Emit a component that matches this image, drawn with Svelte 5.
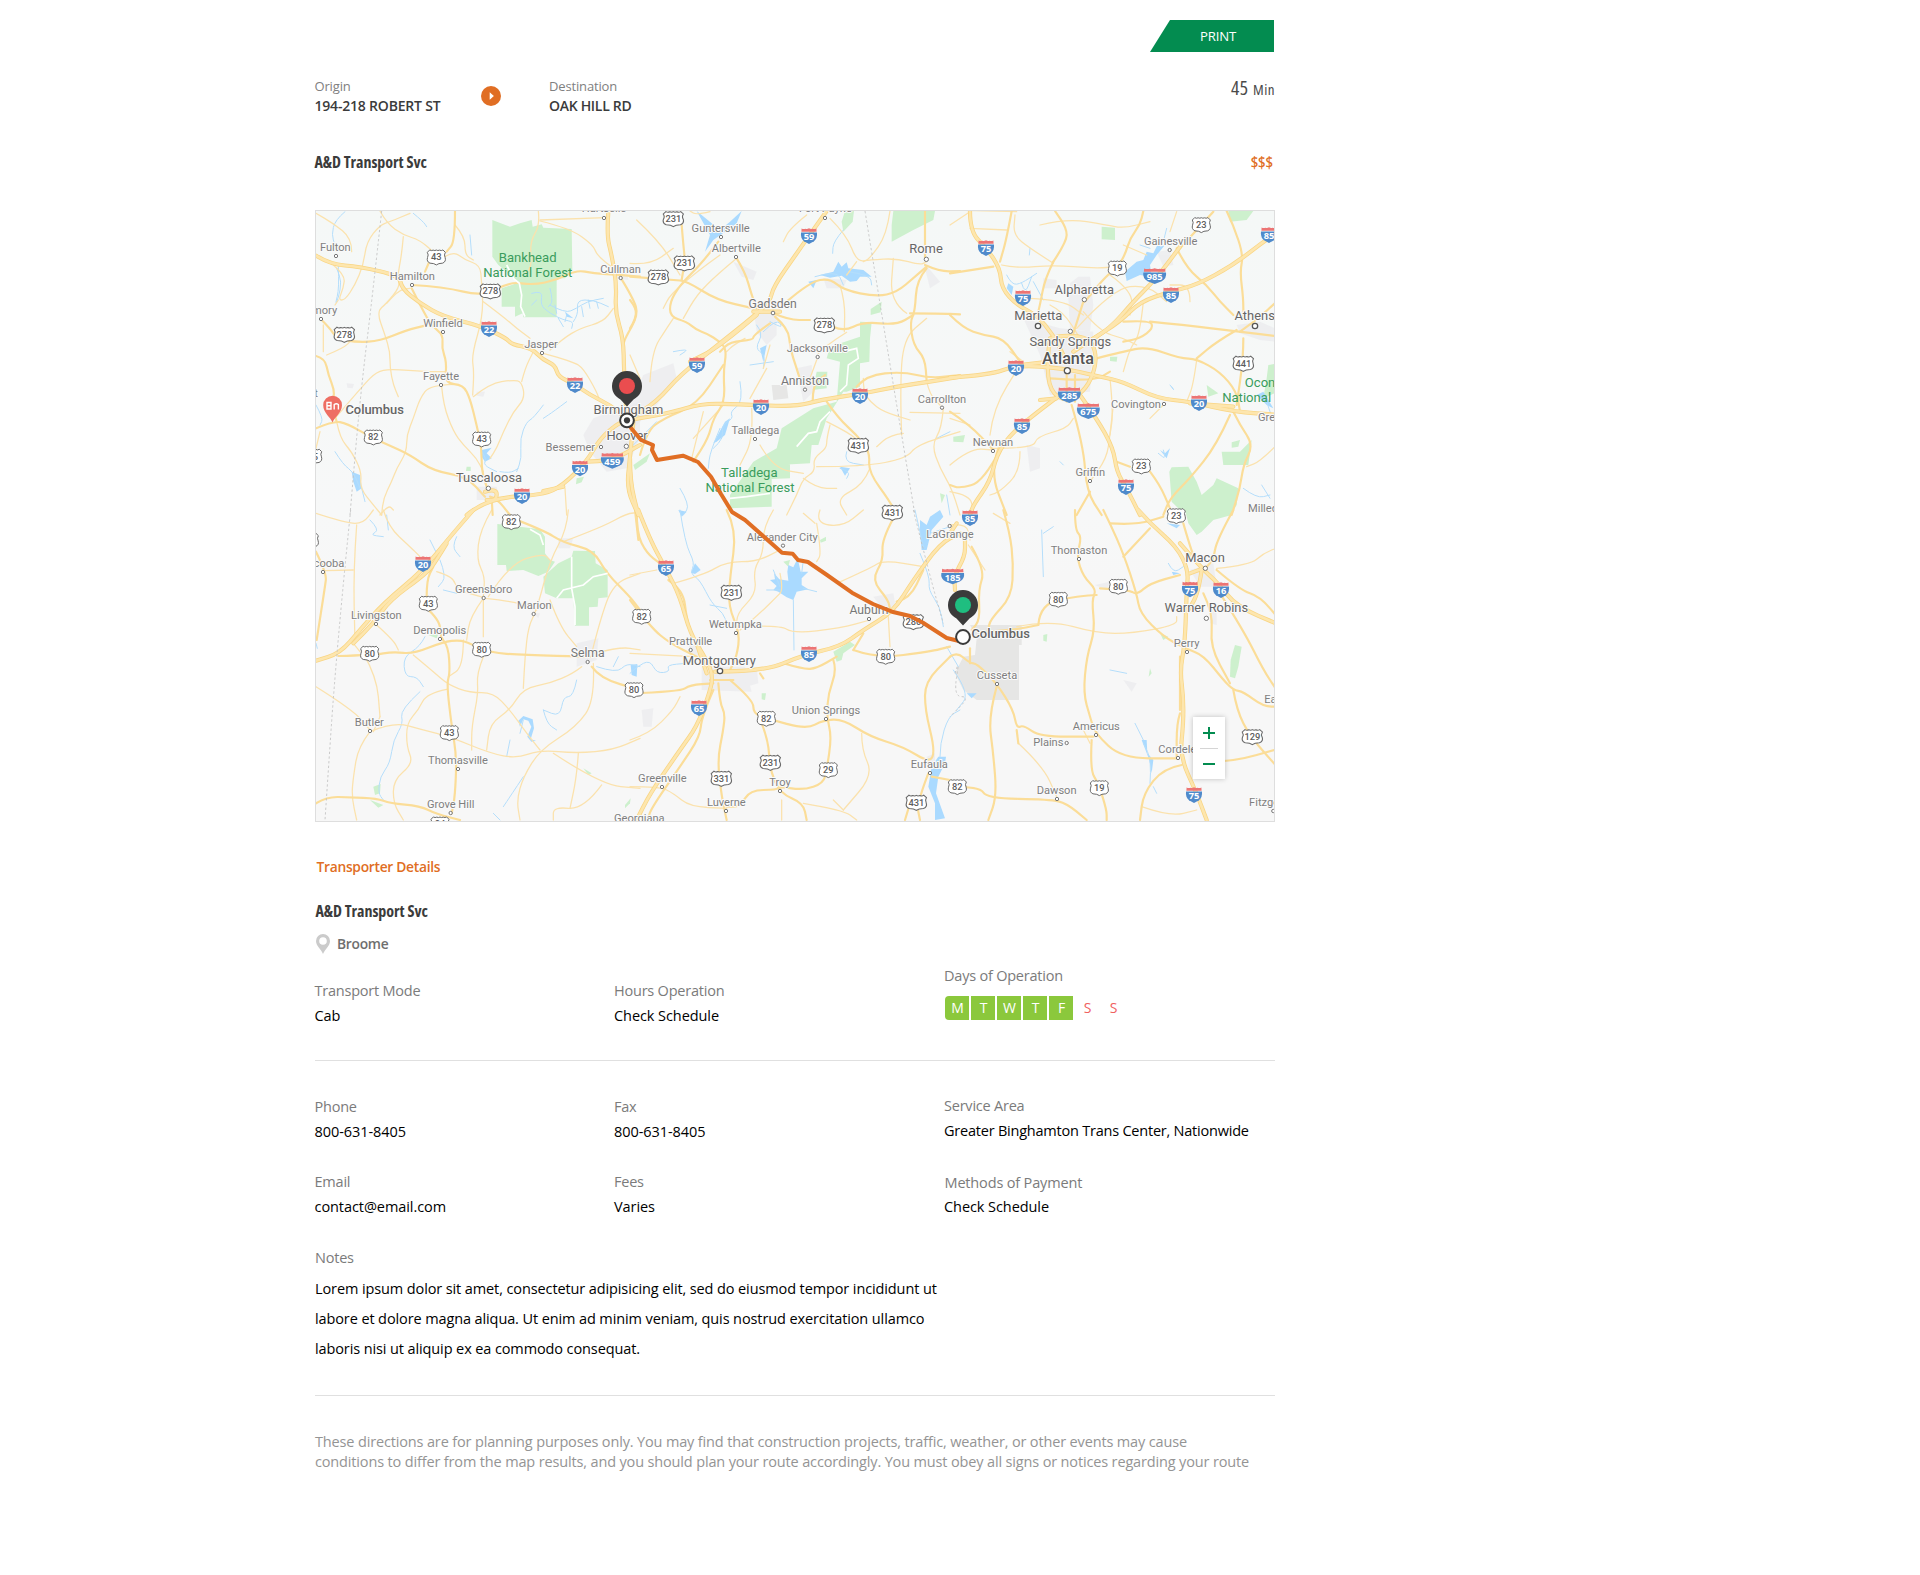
<script>
  // The map is stored as six sections; every section has its own origin and
  // is drawn at a third of its stored coordinates.
  const sections = [
    {
      x: 310, y: 205,
      parks: ['547,45 600,65 630,55 665,45 668,65 695,58 700,68 785,72 787,195 765,220 740,220 740,337 640,337 638,325 615,335 615,305 575,305 575,250 620,235 615,225 590,200 565,180 547,155', '470,785 482,785 482,798 468,798', '800,820 822,815 815,832 798,838'],
      gray: [],
      urban: ['850,640 930,610 990,590 990,700 950,790 890,800 840,740 820,690', '500,845 560,845 570,885 500,885', '500,560 525,560 520,575 500,572', '110,535 132,537 128,550 112,548', '910,190 950,185 955,225 915,220'],
      water: ['105,20 75,45 65,90 75,120', '85,185 88,250 75,300 85,280 95,230 80,190', '665,265 700,255 690,300 720,325 760,345 790,350 785,370', '720,300 765,325 800,310 830,290 880,280', '790,350 805,330 800,285 850,285 895,305', '720,250 730,290 715,305', '840,310 835,285', '680,285 665,300', '745,340 760,365', '815,305 820,335', '735,300 740,325', '770,330 765,350', '860,290 865,310', '700,600 670,640 650,650 630,700 635,760 620,800', '770,590 730,620 700,640', '18,600 40,640 30,660', '75,740 100,780 130,800 150,850', '515,740 530,760 520,780 560,800', '310,25 340,50 350,65', '480,90 485,150', '570,800 600,805 625,790', '155,850 165,890'],
      lakes: ['515,735 545,728 530,745 545,760 525,770 515,755', '125,800 150,810 155,850 140,860 130,830', '765,320 790,340 770,335'],
      minor: ['210,18 230,55 280,90 330,105 380,150', '435,60 465,95 465,150 490,165', '400,158 430,138 465,165 510,180 515,230 520,330 485,450 492,500 488,570', '280,95 275,150 262,215 270,245 230,295 200,320 225,390 240,440 240,490 250,540 265,575', '75,640 160,540 200,500 240,492 350,500 410,500', '430,538 360,540 330,580 310,640 290,690 290,740 260,790 245,830 220,880 215,930', '395,545 400,600 430,680 460,720 500,760 520,800', '490,575 540,535 610,525 635,530 645,580 610,620 580,680 560,730 540,760', '635,530 645,490 670,440', '230,295 265,255 300,250', '685,18 690,60 660,110 665,180 650,205', '690,48 780,70 850,120 860,150 910,190', '690,45 885,38', '520,290 580,335 620,370 660,400', '720,435 760,400 810,370 880,350 910,310', '700,445 790,470 820,490 860,560 870,590', '80,650 90,700 125,740 155,800 150,850 190,900 215,930', '30,680 18,730', '70,180 105,210 100,250 85,285 105,285 135,240 160,180 170,110 210,60 240,50 300,25', '125,140 125,100 70,55 18,25', '40,360 40,440', '50,450 100,430 125,405', '210,930 235,900 250,915', '765,850 770,930', '75,300 85,285'],
      mid: ['435,18 435,110 410,140', '345,200 360,165', '305,250 335,310 365,362 400,390 395,430 410,470 405,535 460,540 480,580 500,660 515,730 515,800 535,860', '18,453 45,460 55,510 75,560 65,600 80,650', '35,345 60,370 80,400 140,412 210,408 290,375 345,362', '305,240 400,245 520,275 600,230 670,240 740,225 800,195 850,205 930,210 990,215', '930,215 970,280 985,330 945,400 940,420', '540,875 560,880 600,930', '18,670 70,648 110,655 190,700 240,722 300,750 370,798 470,815 525,875', '545,880 548,930'],
      major: ['18,152 60,178 150,185 268,212 275,250 330,295 400,335 510,362 590,400 605,418 665,430 700,465 735,480 745,515 790,535 840,570 900,600 950,640', '895,18 890,90 905,150 920,240 915,320 940,400 942,500 950,640', '470,930 530,880 700,870 760,840 830,770 870,700 930,650 960,650', '830,770 900,770 990,720', '970,650 960,760 950,850 985,930', '700,858 760,845', '525,860 560,850 560,885 530,885'],
      border: ['215,18 190,250 150,580 120,930']
    },
    {
      x: 630, y: 205,
      parks: ['690,350 725,352 720,400 718,470 690,475 690,545 650,560 640,560 600,625 590,640 565,720 545,720 540,775 445,780 480,778 480,820 425,822 425,905 300,910 300,870 370,770 440,730 455,670 550,610 620,590 630,470 590,460 600,425 690,395', '755,290 752,322 722,330 722,312', '645,18 672,18 668,50 640,80 635,50', '790,18 915,18 910,45 850,75 785,110 785,60', '560,500 592,500 590,550 548,555', '10,780 60,745 50,770 15,795', '930,865 945,870 935,895'],
      gray: ['425,540 470,540 475,580 430,585'],
      urban: ['40,510 130,475 140,520 80,600 30,650 0,680 0,600', '370,310 440,320 440,390 410,420 380,380', '500,490 545,480 550,560 520,590', '580,220 650,225 640,250 590,250', '880,170 930,230 900,250', '310,170 380,200 370,225 335,215'],
      water: ['640,75 610,110 608,145', '555,215 620,195 640,240', '655,200 720,210 725,240', '380,360 400,385 375,430 405,450 400,490', '400,380 440,340 460,370 420,350', '330,530 340,590 300,620 310,640 275,660 280,700 250,730', '270,670 240,740 235,790', '0,730 80,650', '150,850 180,900 160,930', '650,740 640,770 700,780', '630,790 660,800 650,820', '130,440 180,430 150,450', '960,680 920,700', '950,870 960,930', '360,480 430,470'],
      lakes: ['200,18 270,75 300,50 335,18 320,55 285,80 250,105 225,140 240,90', '570,210 610,200 625,170 635,185 650,172 655,190 700,195 725,215 690,215 680,228 660,230 635,212 600,218', '535,230 560,225 550,250', '250,715 285,650 300,640 285,690 260,710', '390,430 410,420 400,470', '630,785 660,790 645,812'],
      minor: ['240,20 200,30 180,18', '270,150 200,200 120,270 100,310', '20,45 90,110 150,210', '60,530 65,440 110,370 130,340', '320,160 260,210 200,270 160,340', '345,400 310,420 290,440', '530,30 480,70 460,110', '600,40 650,90 680,170 720,165 800,160 870,180 890,170', '680,170 650,210', '780,18 770,90 720,160 700,170', '630,240 645,290 643,380', '565,445 590,420 650,382', '560,465 540,520', '700,520 700,560 720,590 760,620 840,645', '840,622 990,625', '940,610 935,670 905,720 930,790 965,850 990,930', '600,660 590,700 590,730 550,760 555,800 520,820 500,870 470,930', '560,785 700,785 830,760 860,720 990,680', '590,650 650,680 690,710', '390,720 430,790 520,805', '365,610 370,700 330,780', '820,685 780,690 740,725', '830,325 780,290 790,160', '720,790 700,840 620,880 650,930', '890,530 900,570 930,600', '400,490 420,420', '190,700 280,600', '0,175 60,180 130,130', '0,450 30,520', '520,820 560,850 620,850', '410,490 360,580', '220,620 200,700 185,760', '815,690 810,560 820,400 890,340'],
      mid: ['155,60 160,120 165,165 155,225', '0,215 130,225 170,228 260,285 370,310', '265,110 220,170 150,240 120,290 120,335 170,350 200,375 230,385 270,410 290,435 280,500 285,590 250,640 235,700 190,770', '320,160 345,200 365,270 380,310', '430,325 475,345 540,345', '610,365 640,380 700,350 800,360 850,330', '435,335 475,370 480,430 500,490 515,540', '470,290 540,230 600,220 640,255 740,275 800,262 855,215 890,185', '885,18 885,160', '885,180 930,200 990,198', '890,190 860,225 855,320 840,350 850,420 885,460 890,530', '840,325 930,325 990,328', '590,590 625,640 680,690 720,740 715,800 780,890 800,930', '0,285 20,310 15,345 0,370', '548,590 548,540 585,510', '420,355 370,390 370,405 300,410 270,440', '680,545 710,510 820,500 900,520 990,510', '30,750 50,680 100,640 200,600 280,480'],
      major: ['590,18 560,60 500,145 430,245 420,290 370,335 270,415 150,510 80,590 0,640', '380,330 270,425 180,470', '0,645 120,625 215,595 330,598 500,605 570,585 700,565 800,545 900,530 990,515', '0,760 0,830 25,930', '370,320 450,320'],
      border: ['705,18 770,420 855,930']
    },
    {
      x: 950, y: 205,
      parks: ['658,800 665,787 715,785 740,830 755,870 790,840 800,820 865,850 860,900 840,930 750,930 690,915 665,890', '815,740 870,740 905,705 895,780 820,780', '455,65 495,68 495,105 455,103', '835,18 910,18 890,45 840,50', '955,480 985,475 985,560 940,580 950,520', '770,540 805,565 775,575', '845,712 870,705 865,725 845,728', '10,695 45,690 40,712 10,710', '480,455 502,455 500,470 480,468'],
      gray: [],
      urban: ['360,235 385,215 420,215 430,300 420,380 360,370 355,280', '860,360 930,350 975,370 975,410 930,405 870,385', '220,340 330,370 430,380 420,560 300,570 270,450', '280,220 320,225 320,250 280,250', '230,720 270,730 270,790 240,800', '620,140 660,135 670,180 640,185'],
      water: ['170,210 185,240 215,235 260,205', '215,235 225,270 245,215', '280,285 250,230', '660,540 675,560 665,545', '640,735 650,765 625,745', '880,850 920,880 960,870', '935,840 960,880', '950,590 970,650', '330,770 340,780', '240,130 238,150', '600,130 570,120', '640,110 650,70'],
      lakes: ['525,200 560,170 580,165 590,140 610,145 625,115 632,125 645,120 620,150 600,180 605,215 570,210 530,228', '175,235 190,245 185,270 170,250', '630,735 645,745 660,730 650,760', '920,570 940,560 970,610 950,600'],
      minor: ['60,70 170,75', '155,180 200,190 310,180 430,190 510,185', '270,60 350,40 470,60 520,70 600,50', '660,80 680,20', '580,290 570,390 540,430 520,500', '240,280 340,285 400,330', '130,730 250,730 260,695 350,670 370,640', '490,600 480,690 470,760 420,830', '740,465 730,540 710,590', '120,690 130,610 210,480', '310,175 240,130 190,90 195,30', '980,720 930,770 890,785', '210,740 210,800 150,860 120,870', '520,120 590,150', '0,60 60,20', '380,370 490,250 590,240 650,290', '400,320 450,380 520,400 560,420', '300,300 340,320 390,400', '480,210 550,260 540,330', '0,640 60,660', '600,640 640,600', '0,860 60,870 70,920', '0,780 60,730 130,735', '720,290 720,240 660,240', '480,520 490,620 480,690', '0,15 200,20', '180,440 220,470'],
      mid: ['310,170 350,110 350,70 315,18', '310,170 285,220 270,300 262,330', '400,290 370,385', '405,290 460,220 500,190 525,150 540,100 570,60 580,18', '600,350 700,360 870,380 990,395', '870,380 915,350 990,280', '860,375 800,410 740,460', '520,350 600,345 610,370 570,400 520,410', '440,460 520,440 590,425 690,460 740,462 810,500 860,560 870,620', '880,400 880,460 860,600', '850,620 870,660 910,720 880,780 870,850 845,930', '830,18 850,60 880,150 870,200 880,280 880,340', '680,130 710,190 770,240 810,290 850,330', '690,130 735,80 790,20', '840,630 800,720 720,820 660,880 640,930', '365,600 400,720 410,860 455,930', '420,860 380,930', '500,770 540,785', '600,800 630,840 660,910', '0,205 130,185', '0,330 40,370 100,390 160,400 210,470', '0,620 60,660 130,735', '145,730 120,800 170,930', '150,735 100,830 30,850 0,840', '185,18 170,100 150,170', '350,510 350,590', '375,510 375,590', '300,520 430,530 480,500'],
      major: ['60,18 60,80 110,130 150,190 155,250 200,300 260,330 310,390 340,450', '390,570 440,640 490,730 500,800 530,850 570,930', '985,80 940,110 850,180 740,240 660,260 570,290 510,350 430,400 370,440', '690,125 650,180 600,240 550,290 480,370 400,420', '0,518 120,510 200,480 340,490 450,515 520,530 620,580 720,590 850,620 990,630', '720,595 850,605', '330,570 250,630 180,690 140,750 120,830 70,900 60,930', '300,400 290,470 300,560 350,590 400,560 430,510 440,450 420,400 350,390 300,400', '270,585 320,580', '210,480 300,470'],
      border: []
    },
    {
      x: 310, y: 510,
      parks: ['562,42 690,58 705,80 705,130 720,150 735,155 715,185 685,198 640,180 590,183 588,165 562,165', '790,122 855,123 857,160 893,180 893,262 865,265 863,290 837,292 837,347 795,347 790,265 740,265 705,250 700,200 745,160 785,140', '180,870 220,885 205,893', '190,830 212,822 210,850 195,855', '355,375 385,372 380,385', '945,885 962,865 960,880 945,895', '820,775 845,790 835,795'],
      gray: [],
      urban: ['800,400 865,385 860,450 800,470', '745,85 790,85 780,115 745,115', '670,310 690,310 685,325'],
      water: ['180,30 210,60 180,75 220,80', '230,15 235,60', '440,80 425,110 450,140', '390,150 410,200 385,230', '345,380 330,410 280,440 285,500 320,500 340,530', '330,545 270,600 280,640 250,690 240,760 210,800 205,850 220,870', '640,630 630,670', '860,470 920,490 950,460 990,470', '910,470 925,440', '800,510 790,560 760,560 750,620 700,600', '380,130 360,90', '700,600 710,640 740,660', '600,690 590,740', '640,800 600,860 580,890', '18,400 22,415', '550,910 570,930', '400,240 440,250'],
      lakes: ['625,632 640,618 668,628 672,655 662,688 678,692 664,695 652,680 664,650 655,632 640,628 630,650', '962,465 982,462 980,500 965,495'],
      minor: ['18,10 110,40 160,40 190,0', '140,45 130,180 135,400', '45,182 130,180', '220,0 235,50 300,110 330,140', '380,185 430,200 440,240 520,262', '545,0 510,60 500,150 525,200 520,260', '525,265 620,275 680,300', '535,260 600,160 700,130 720,150', '775,0 770,60 720,150 680,300 655,350 645,440 640,535', '520,265 520,380', '520,265 480,320 470,390', '720,270 750,350 800,410', '845,430 870,330 910,220 990,190', '815,470 790,490 720,520 640,535 600,600 540,640 530,720', '460,390 460,470 415,500', '310,435 370,485 415,525 480,548 550,548 600,600 650,670 690,720', '520,440 500,490 505,550 485,650 485,720', '410,538 350,550 325,600 290,640 290,710 310,760 250,810 250,880 280,930', '200,345 250,390 265,420', '160,430 200,500 210,620', '18,530 130,600 180,660', '180,665 250,635 340,660 420,680 540,730 620,745 690,720 800,730 910,720 990,685', '180,665 145,710 130,800 125,860 140,930', '850,460 855,570 800,650 690,720 640,800 620,870 630,930', '730,730 875,825 990,835', '805,730 800,800 780,895', '875,825 820,900 730,890 730,930', '760,95 880,50 950,10 990,8', '190,665 210,620', '130,400 150,425', '855,430 930,410 990,420'],
      mid: ['350,260 350,210 370,170', '85,438 190,435 250,425 310,432 400,395 450,390 480,400 540,428 640,435 840,440', '345,290 390,330 390,380 415,410 420,490 410,520 425,650 440,740 435,860 425,910', '18,880 50,860 120,862 200,865 240,880 330,888 380,912 450,930', '590,18 700,60 760,98 850,120 890,190 960,260 990,300', '845,470 870,505 990,540', '18,125 50,190 45,230 20,390', '975,0 985,90'],
      major: ['490,0 420,80 340,180 220,280 150,360 90,430 18,452', '410,100 380,150 350,190 240,270 190,340 130,400'],
      border: ['122,0 80,410 45,930']
    },
    {
      x: 630, y: 510,
      parks: ['610,425 660,395 675,405 640,430 635,450 620,455', '395,550 408,550 405,570 395,568', '570,90 588,80 588,92 572,98', '460,155 480,150 475,170'],
      gray: [],
      urban: ['215,470 345,470 365,545 215,540', '175,400 215,410 215,440 185,440', '730,260 790,250 800,310 760,300', '890,740 915,730 915,770 890,770', '35,600 70,595 65,650 40,650', '340,480 380,470 385,520 350,530'],
      water: ['150,0 165,100 195,160 180,190 210,210 245,280 280,310 290,340', '490,270 492,420', '0,490 20,470 60,450 80,490 120,485 110,465 170,460', '240,285 290,295', '930,740 930,700 955,620 990,600', '870,130 900,200 895,240 930,290 940,350', '855,0 880,110', '900,70 960,50', '950,410 985,470', '430,180 450,230', '410,240 450,240', '520,235 560,245', '520,150 515,190'],
      lakes: ['475,165 490,172 503,145 512,185 535,185 515,205 515,225 535,238 500,245 490,270 470,262 445,245 430,240 440,228 420,210 435,208 432,190 448,208 475,212 472,185', '905,770 925,740 948,740 945,760 925,800 918,850 945,925 915,930 915,880 895,830', '870,30 890,45 900,20 930,0 940,20 905,60 890,120 875,120 870,70', '183,188 195,160 212,180 195,192', '145,0 170,5 155,20'],
      minor: ['0,195 80,180', '130,220 220,195 290,155 380,155 450,120', '430,0 400,50 400,130 370,180 380,250 320,310 320,360', '570,0 555,40 640,50 700,0', '560,40 575,130 560,155', '620,220 720,175 760,150 880,170', '320,350 450,345 490,370 630,355 720,330', '450,190 460,240 440,260 390,310 330,360', '0,430 190,440', '0,690 60,670 130,600 150,560', '0,830 90,830 130,850 180,890 290,895', '695,670 695,720 730,795 640,900', '455,870 455,930', '520,880 640,900 680,930', '775,320 780,410', '555,40 520,10', '610,870 640,900'],
      mid: ['20,0 20,70 50,130 90,160', '290,0 320,60 300,200 295,290 330,370 320,440 300,480', '0,270 60,350 120,400 200,440', '0,550 150,545 180,525 250,520', '300,510 370,570 370,610 410,625 530,658 580,630 640,628 720,680 820,710 900,760 915,720 885,600 885,515 960,440', '265,520 270,580 285,610 280,660 262,750 275,860 290,930', '395,640 415,690 420,780 450,850 520,880 530,930', '610,450 620,480 595,550 590,620 605,680 590,780 580,820 520,840 450,830 440,840 360,840 330,890 290,890', '790,25 755,90 760,150 725,210 775,270 780,300', '460,460 520,478 560,475 620,440', '670,420 740,445 900,425 960,410', '895,790 860,880 870,930', '840,880 825,930', '905,800 960,810', '390,490 400,505', '700,370 670,420', '115,210 160,240 170,330 195,400', '250,540 215,620 210,680 150,770 60,900 55,930', '240,510 310,510', '800,275 840,265 880,180'],
      major: ['25,0 60,90 110,180 150,260 180,370 230,450 250,500 235,560 200,650 150,720 60,850 15,940', '255,485 400,485 520,435 630,410 700,360 790,305 850,210 930,100 990,70', '200,400 230,490'],
      border: ['850,0 900,200 940,340']
    },
    {
      x: 950, y: 510,
      parks: ['705,0 810,0 845,15 790,30 755,65 740,75 715,40', '855,405 875,410 865,470 855,505 840,500 842,450', '280,375 292,372 290,395 280,392', '630,370 655,380 640,390', '600,475 605,490 596,500'],
      gray: ['60,345 215,345 215,405 207,405 207,570 80,570 40,540 15,490 40,440 75,435 80,385'],
      urban: ['720,180 790,160 800,230 750,230', '780,300 800,300 800,345 780,340', '435,225 480,215 470,240', '520,510 560,520 545,545', '690,400 720,395 715,420', '415,650 450,650 445,670'],
      water: ['275,60 280,200', '655,160 670,190 700,170', '555,640 580,690', '600,820 605,750 580,700', '620,850 610,830', '480,480 530,490', '10,480 60,550 20,600', '280,70 310,50'],
      lakes: ['575,690 590,690 592,730 610,750 605,790 598,750', '50,550 80,550 65,565', '655,165 665,185 690,190 670,195', '650,40 690,45 680,55'],
      minor: ['200,350 300,330 440,370 550,370 680,345 680,320', '205,700 280,770 320,860', '800,175 900,165 940,130 990,110', '575,890 660,920 740,900', '0,45 50,40 60,90', '55,105 105,180', '420,700 400,660', '130,10 180,40'],
      mid: ['375,0 375,60 395,80 380,140 400,200 440,240 425,270 435,360 410,440 400,550 420,620 435,670 515,745 680,745', '780,755 850,755 990,715', '450,235 540,240 560,255 600,220 690,195', '265,345 270,280 390,258 440,255', '110,365 190,360 265,345', '460,0 480,40 520,130 560,250 570,310 640,380 705,415 760,435 820,510 850,540 880,545 940,590 990,590', '480,40 560,45 640,20', '760,250 790,310 780,410 840,520', '850,540 860,600 900,680 990,780', '800,180 870,240 930,260 990,330', '810,250 880,360 940,480 980,540', '160,0 180,70 190,160 185,260 120,330 115,360', '65,110 105,180 85,240 90,330 65,360', '60,415 60,460', '0,440 20,425 60,460 80,460 140,520 190,600 200,655 220,645 270,680 430,680', '140,530 115,620 130,730 140,860 115,930', '0,830 90,830 110,865 300,868 350,880 410,930', '425,690 420,780 445,820 470,900 470,930', '690,610 680,640 680,745', '695,765 640,775 580,850 570,930', '600,55 520,140', '700,40 720,110 740,160', '850,0 800,90 790,150 770,170', '690,440 690,600', '200,660 205,700'],
      major: ['565,0 600,40 680,110 715,180 710,240 705,400 690,480 700,560 700,640 690,740 740,850 770,930', '690,100 760,180 800,215 860,290 990,345', '755,180 745,250 715,300', '15,240 10,200 45,140 45,90', '0,70 20,40', '720,190 760,175'],
      border: ['15,490 30,440 10,560 60,560 0,620']
    }
  ];

  // [section, label, centre x, baseline, size]
  const places = [
    [0, 'Fulton', 76, 137, 's'], [0, 'Hamilton', 307, 224, 's'], [0, 'Winfield', 399, 365, 's'], [0, 'Jasper', 693, 429, 's'],
    [0, 'Fayette', 393, 524, 's'], [0, 'Amory', 33, 327, 's'], [0, 'Hartselle', 882, 22, 's'], [0, 'Cullman', 932, 203, 's'],
    [0, 'Birmingham', 955, 628, 'm'], [0, 'Hoover', 951, 704, 'm'], [0, 'Bessemer', 781, 738, 's'], [0, 'Tuscaloosa', 537, 832, 'm'],
    [0, 'Columbus', 194, 627, 'b'], [0, 't', 18, 576, 's'],
    [1, 'Guntersville', 272, 80, 's'], [1, 'Albertville', 319, 140, 's'], [1, 'Fort Payne', 586, 22, 's'], [1, 'Rome', 888, 145, 'm'],
    [1, 'Gadsden', 428, 309, 'n'], [1, 'Jacksonville', 562, 440, 's'], [1, 'Anniston', 525, 540, 'n'], [1, 'Talladega', 376, 687, 's'],
    [2, 'Gainesville', 662, 119, 's'], [2, 'Alpharetta', 403, 266, 'm'], [2, 'Marietta', 265, 344, 'm'], [2, 'Sandy Springs', 361, 423, 'm'],
    [2, 'Atlanta', 354, 476, 'l'], [2, 'Carrollton', -24, 593, 's'], [2, 'Covington', 558, 609, 's'], [2, 'Newnan', 129, 723, 's'],
    [2, 'Griffin', 421, 812, 's'], [2, 'Athens', 914, 344, 'm'], [2, 'Greensboro', 1010, 647, 's'], [2, 'Milledgeville', 986, 920, 's'],
    [3, 'Scooba', 47, 171, 's'], [3, 'Greensboro', 521, 249, 's'], [3, 'Marion', 673, 297, 's'], [3, 'Livingston', 199, 327, 's'],
    [3, 'Demopolis', 389, 372, 's'], [3, 'Selma', 833, 441, 'n'], [3, 'Butler', 178, 647, 's'], [3, 'Thomasville', 444, 762, 's'],
    [3, 'Grove Hill', 422, 893, 's'],
    [4, 'Alexander City', 457, 92, 's'], [4, 'LaGrange', 960, 83, 's'], [4, 'Wetumpka', 316, 354, 's'], [4, 'Prattville', 182, 405, 's'],
    [4, 'Montgomery', 268, 464, 'm'], [4, 'Auburn', 717, 312, 'n'], [4, 'Union Springs', 588, 612, 's'], [4, 'Eufaula', 898, 774, 's'],
    [4, 'Greenville', 97, 815, 's'], [4, 'Troy', 450, 828, 's'], [4, 'Luverne', 289, 888, 's'], [4, 'Georgiana', 28, 937, 's'],
    [5, 'Thomaston', 387, 131, 's'], [5, 'Macon', 765, 157, 'm'], [5, 'Warner Robins', 769, 307, 'm'], [5, 'Columbus', 152, 385, 'b'],
    [5, 'Cusseta', 141, 506, 's'], [5, 'Perry', 710, 411, 's'], [5, 'Americus', 439, 660, 's'], [5, 'Plains', 295, 708, 's'],
    [5, 'Cordele', 682, 728, 's'], [5, 'Dawson', 320, 851, 's'], [5, 'Eastman', 1008, 578, 's'], [5, 'Fitzgerald', 970, 887, 's'],
    [0, 'Bankhead', 653, 171, 'g'], [0, 'National Forest', 653, 216, 'g'], [1, 'Talladega', 358, 817, 'g'],
    [1, 'National Forest', 360, 861, 'g'], [2, 'Oconee', 951, 546, 'g'], [2, 'National Forest', 950, 590, 'g']
  ];

  // [section, x, y, radius]
  const dots = [
    [0, 78, 153, 5], [0, 306, 240, 5], [0, 399, 381, 5], [0, 696, 444, 5], [0, 393, 540, 5], [0, 33, 342, 5], [0, 882, 39, 5],
    [0, 932, 219, 5], [0, 949, 724, 6.5], [0, 873, 726, 5], [0, 535, 850, 6.5],
    [1, 273, 96, 5], [1, 318, 156, 5], [1, 585, 39, 5], [1, 889, 163, 6.5], [1, 429, 324, 5.5], [1, 563, 456, 5], [1, 525, 554, 5], [1, 375, 702, 5],
    [2, 659, 135, 5], [2, 403, 284, 6.5], [2, 264, 363, 8], [2, 361, 379, 6.5], [2, 352, 497, 9], [2, -24, 608, 5], [2, 642, 597, 5],
    [2, 129, 738, 5], [2, 420, 828, 5], [2, 915, 363, 8],
    [3, 39, 186, 5], [3, 521, 264, 5], [3, 671, 312, 5], [3, 198, 342, 5], [3, 390, 387, 5], [3, 833, 456, 5], [3, 180, 663, 5],
    [3, 444, 777, 5], [3, 422, 909, 5],
    [4, 459, 107, 5], [4, 959, 48, 5], [4, 318, 369, 5], [4, 182, 420, 5], [4, 270, 483, 8], [4, 717, 327, 5], [4, 588, 627, 5],
    [4, 900, 789, 5], [4, 96, 831, 5], [4, 450, 843, 5], [4, 288, 903, 5],
    [5, 387, 147, 5], [5, 766, 175, 6.5], [5, 769, 325, 6.5], [5, 141, 522, 5], [5, 711, 426, 5], [5, 438, 675, 5], [5, 350, 699, 5],
    [5, 684, 744, 5], [5, 321, 867, 5], [5, 970, 903, 5]
  ];

  const interstates = [
    [0, '22', 537, 372], [0, '22', 795, 540], [0, '459', 907, 767], [0, '20', 810, 790], [0, '20', 636, 873],
    [1, '59', 537, 93], [1, '59', 201, 480], [1, '20', 393, 606], [1, '20', 690, 573],
    [2, '75', 108, 129], [2, '75', 219, 279], [2, '985', 614, 213], [2, '85', 663, 270], [2, '85', 957, 90], [2, '20', 198, 489],
    [2, '285', 358, 570], [2, '675', 415, 618], [2, '20', 747, 594], [2, '85', 216, 663], [2, '75', 528, 846],
    [3, '20', 339, 162], [4, '65', 108, 174], [4, '65', 207, 594], [4, '85', 537, 432],
    [5, '85', 60, 24], [5, '185', 8, 199], [5, '75', 720, 238], [5, '16', 813, 240], [5, '75', 732, 855]
  ];

  const highways = [
    [0, '43', 379, 157], [0, '278', 541, 259], [0, '278', 103, 389], [0, '82', 190, 697], [0, '43', 515, 703], [0, '45', 8, 755],
    [1, '231', 130, 42], [1, '231', 163, 175], [1, '278', 85, 217], [1, '278', 583, 361], [1, '431', 685, 722],
    [2, '19', 502, 190], [2, '23', 754, 60], [2, '441', 880, 476], [2, '23', 574, 784],
    [3, '82', 604, 36], [3, '43', 355, 281], [3, '80', 179, 431], [3, '80', 515, 419], [3, '43', 418, 669], [3, '11', -2, 92], [3, '84', 390, 943],
    [4, '431', 787, 8], [4, '231', 304, 248], [4, '82', 35, 320], [4, '80', 12, 540], [4, '280', 850, 336], [4, '80', 767, 440],
    [4, '82', 409, 626], [4, '231', 421, 758], [4, '331', 274, 806], [4, '29', 595, 780], [4, '431', 859, 878],
    [5, '23', 679, 18], [5, '80', 325, 269], [5, '80', 505, 230], [5, '82', 22, 831], [5, '19', 448, 834], [5, '129', 907, 681]
  ];

  const route = '627,422 631,428 641,440 653,445 652,450 657,460 683,455.7 698,462 711,476.7 721,494 732,512 745,520 782,552.7 792.7,553.7 798,560 808,562 827,575 852,592.7 873,604 892,611.7 910,616 923,622.7 946.7,638 963,642';

  const at = (section, x, y) => `translate(${sections[section].x + x / 3} ${sections[section].y + y / 3})`;

  // Softens a polyline by turning each vertex into a quadratic bend.
  function soften(points) {
    const p = points.split(' ').map((pair) => pair.split(',').map(Number));
    if (p.length < 3) return `M${p.join('L')}`;
    let d = `M${p[0]}`;
    for (let i = 1; i < p.length - 1; i += 1) {
      const [x, y] = p[i];
      const [nx, ny] = p[i + 1];
      d += `Q${x},${y} ${(x + nx) / 2},${(y + ny) / 2}`;
    }
    return `${d}L${p[p.length - 1]}`;
  }

  const layers = ['urban', 'parks', 'gray', 'lakes'];
  const lines = ['water', 'minor', 'mid', 'major-case', 'major', 'border'];

  const days = [
    { letter: 'M', open: true }, { letter: 'T', open: true }, { letter: 'W', open: true }, { letter: 'T', open: true },
    { letter: 'F', open: true }, { letter: 'S', open: false }, { letter: 'S', open: false }
  ];
</script>

{#snippet field(label, value)}
  <div class="field">
    <div class="label">{label}</div>
    <div class="value">{value}</div>
  </div>
{/snippet}

<main class="page">
  <button class="print">PRINT</button>

  <section class="trip">
    <div class="stop origin">
      <div class="caption">Origin</div>
      <div class="street">194-218 ROBERT ST</div>
    </div>
    <svg class="arrow" viewBox="0 0 20 20"><circle cx="10" cy="10" r="10" fill="#e06e24" /><path d="M8.7 6.3v7.4l4.200-3.700z" fill="#fff" /></svg>
    <div class="stop">
      <div class="caption">Destination</div>
      <div class="street">OAK HILL RD</div>
    </div>
    <div class="duration">45 <small>Min</small></div>
  </section>

  <div class="carrier">
    <h1>A&amp;D Transport Svc</h1>
    <span class="price">$$$</span>
  </div>

  <div class="map">
    <svg class="canvas" viewBox="316 211 958 610">
      {#each layers as layer}
        {#each sections as s}
          <g transform="translate({s.x} {s.y}) scale(0.33333)" class={layer}>
            {#each s[layer] as shape}<polygon points={shape} />{/each}
          </g>
        {/each}
      {/each}
      {#each lines as line}
        {#each sections as s}
          <g transform="translate({s.x} {s.y}) scale(0.33333)" class="line {line}">
            {#each s[line.replace('-case', '')] as shape}<path d={soften(shape)} />{/each}
          </g>
        {/each}
      {/each}
      <g transform="translate(310 205) scale(0.33333)" class="trail">
        <path d="M590,180L612,222L628,235L635,270L632,305L645,335" />
      </g>
      <g transform="translate(630 205) scale(0.33333)" class="trail">
        <path d="M500,725L535,685L560,680L570,650L600,620M640,440L680,430L685,460L655,480L650,540L630,560M300,880L350,875L420,865" />
      </g>
      <g transform="translate(310 510) scale(0.33333)" class="trail">
        <path d="M785,140L785,235L795,290L795,345M740,265L760,240L820,225L850,200L893,190M660,58L690,75L700,105" />
      </g>

      {#each dots as [s, x, y, r]}
        <circle class="dot" transform={at(s, x, y)} r={r / 3} class:strong={r > 7} />
      {/each}
      {#each places as [s, name, x, y, size]}
        <text class="place {size}" transform={at(s, x, y)}>{name}</text>
      {/each}
      {#each highways as [s, number, x, y]}
        <g transform="{at(s, x, y)} scale({number.length > 2 ? 1.12 : 1} 1)">
          <path class="us" d="M-6.6-7.4Q-5-6.2-3.2-7.2Q-1.4-6.3 0-7.3Q1.4-6.3 3.2-7.2Q5-6.2 6.6-7.4L9-5Q7.4-2.4 8.8 0.2Q10 4.2 6.4 5.8Q2 5.9 0 7.6Q-2 5.9-6.4 5.8Q-10 4.2-8.8 0.2Q-7.4-2.4-9-5Z" />
        </g>
        <text class="us-number" transform={at(s, x, y + 9)}>{number}</text>
      {/each}
      {#each interstates as [s, number, x, y]}
        <g transform="{at(s, x, y)} scale({number.length > 2 ? 1.42 : 1} 1)">
          <path d="M-7.4-7.6Q-5.5-6.4-3.6-7.3Q-1.8-6.7 0-7.7Q1.8-6.7 3.6-7.3Q5.5-6.4 7.4-7.6L7.6-4.2H-7.6Z" fill="#ec7474" />
          <path d="M-8-3.4H8Q8.6 2.4 5 5.2L0 8L-5 5.2Q-8.6 2.4-8-3.4Z" fill="#4f8acb" />
        </g>
        <text class="i-number" transform={at(s, x, y + 13)}>{number}</text>
      {/each}

      <path d="M332.500 422.500C331 417.500 323.200 413 323.200 405.200A9.400 9.400 0 0 1 342 405.200C342 413 334 417.500 332.500 422.500Z" fill="#ee6e63" />
      <path d="M327 402.500h4v6.500h-4zM327 405.800h4M334.200 409.600v-5.100q2.100-1.400 4.200 0v5.100" fill="none" stroke="#fff" stroke-width="1.400" />

      <polyline class="route" points={route} />

      <path class="pin" d="M627 406.500L620.500 399.500C614 396 612 391 612 386A15 15 0 0 1 642 386C642 391 640 396 633.500 399.500Z" />
      <circle cx="627" cy="386" r="8" fill="#ea4d4f" />
      <circle class="ring" cx="627" cy="420.300" r="6.900" />
      <circle cx="627" cy="420.300" r="3.100" fill="#3b3b3b" />
      <path class="pin" d="M963 625.500L956.500 618.500C950 615 948 610 948 605A15 15 0 0 1 978 605C978 610 976 615 969.500 618.500Z" />
      <circle cx="963" cy="605" r="8" fill="#1fbe80" />
      <circle class="ring" cx="963" cy="637" r="6.900" />
    </svg>

    <div class="zoom">
      <button aria-label="Zoom in"><svg viewBox="0 0 12 12"><path d="M6 0v12M0 6h12" /></svg></button>
      <button aria-label="Zoom out"><svg viewBox="0 0 12 12"><path d="M0 6h12" /></svg></button>
    </div>
  </div>

  <h2>Transporter Details</h2>
  <h3>A&amp;D Transport Svc</h3>
  <div class="place-line">
    <svg viewBox="0 0 14 20"><path fill-rule="evenodd" d="M7 0a7 7 0 0 1 7 7c0 5-5 8-7 13c-2-5-7-8-7-13a7 7 0 0 1 7-7zM7 3.200a3.800 3.800 0 1 0 0 7.600a3.800 3.800 0 0 0 0-7.600z" fill="#cbcbcb" /></svg>
    <span>Broome</span>
  </div>

  <section class="grid service">
    {@render field('Transport Mode', 'Cab')}
    {@render field('Hours Operation', 'Check Schedule')}
    <div class="schedule">
      <div class="label">Days of Operation</div>
      <div class="days">
        {#each days as day}<span class:open={day.open}>{day.letter}</span>{/each}
      </div>
    </div>
  </section>

  <hr />

  <section class="grid contact">
    {@render field('Phone', '800-631-8405')}
    {@render field('Fax', '800-631-8405')}
    {@render field('Service Area', 'Greater Binghamton Trans Center, Nationwide')}
    {@render field('Email', 'contact@email.com')}
    {@render field('Fees', 'Varies')}
    {@render field('Methods of Payment', 'Check Schedule')}
  </section>

  <section class="notes">
    <div class="label">Notes</div>
    <p>
      Lorem ipsum dolor sit amet, consectetur adipisicing elit, sed do eiusmod tempor incididunt ut<br />
      labore et dolore magna aliqua. Ut enim ad minim veniam, quis nostrud exercitation ullamco<br />
      laboris nisi ut aliquip ex ea commodo consequat.
    </p>
  </section>

  <hr />

  <p class="disclaimer">
    These directions are for planning purposes only. You may find that construction projects, traffic, weather, or other events may cause<br />
    conditions to differ from the map results, and you should plan your route accordingly. You must obey all signs or notices regarding your route
  </p>
</main>

<style>
  :global(body) { background: #fff; }
  .page {
    box-sizing: border-box;
    width: 1275px;
    min-height: 1575px;
    padding: 20px 0 0 315px;
    display: flex;
    flex-direction: column;
    font: 14.5px/20px 'Open Sans', 'Noto Sans', sans-serif;
    color: #000;
    white-space: nowrap;
  }
  h1, h2, h3, p { margin: 0; }
  button { border: 0; padding: 0; font: inherit; cursor: pointer; }
  .print {
    align-self: flex-end;
    width: 124px;
    height: 32px;
    margin-right: 1px;
    padding-left: 12px;
    background: #038c50;
    color: #fff;
    font-size: 13.2px;
    letter-spacing: -0.2px;
    clip-path: polygon(20px 0, 100% 0, 100% 100%, 0 100%);
  }
  .trip { display: flex; margin-top: 24px; height: 40px; }
  .origin { width: 166px; }
  .caption { color: #808080; font-size: 13px; letter-spacing: -0.15px; }
  .street { color: #3b3b3b; font-size: 14px; font-weight: 600; letter-spacing: -0.2px; }
  .stop { margin-left: -0.5px; }
  .stop:not(.origin) .street { letter-spacing: -0.3px; }
  .arrow { width: 20px; height: 20px; margin: 10px 48.5px 0 0.5px; }
  .duration { margin-left: auto; color: #4a4a4a; font-size: 19.5px; line-height: 24px; font-stretch: 75%; letter-spacing: 0.6px; }
  .duration small { font-size: 15px; letter-spacing: 0.5px; }
  .carrier { display: flex; justify-content: space-between; margin-top: 34px; }
  h1, h3, .price { font-size: 16px; line-height: 24px; font-weight: 700; font-stretch: 75%; color: #3b3b3b; letter-spacing: -0.05px; }
  h1 { margin-left: -0.5px; }
  .carrier .price { color: #e06e24; margin-right: 2px; font-weight: 600; font-size: 16.8px; }
  .map {
    position: relative;
    box-sizing: border-box;
    height: 612px;
    margin-top: 36px;
    border: 1px solid #dedede;
    background: linear-gradient(#f5f8f7 0, #f7f8f8 50%, #f7f7f7 60%);
    overflow: hidden;
  }
  .canvas { display: block; width: 958px; height: 610px; }
  .parks { fill: #cdf0cd; }
  .urban { fill: #ebebee; opacity: 0.7; }
  .gray { fill: #e6e6e5; }
  .lakes { fill: #aadaff; }
  .line { fill: none; stroke-linejoin: round; stroke-linecap: round; }
  .water { stroke: #b5defb; stroke-width: 3; }
  .minor { stroke: #fbe2ad; stroke-width: 3.8; }
  .mid { stroke: #fbdd98; stroke-width: 6.5; }
  .major-case { stroke: #f9d583; stroke-width: 12.5; }
  .major { stroke: #fde6ae; stroke-width: 8; }
  .border { stroke: #c0c0c0; stroke-width: 2.5; stroke-dasharray: 7 7; stroke-linecap: butt; }
  .trail { fill: none; stroke: #fff; stroke-width: 5; }
  .dot { fill: #fff; stroke: #777; stroke-width: 1; }
  .strong { stroke: #555; stroke-width: 1.3; }
  .place {
    font-family: Roboto, 'Liberation Sans', sans-serif;
    text-anchor: middle;
    stroke: #fafafa;
    stroke-width: 2px;
    stroke-linejoin: round;
    paint-order: stroke;
  }
  .s { font-size: 11.1px; fill: #7f7f7f; }
  .n { font-size: 12.2px; fill: #777; }
  .m { font-size: 12.9px; fill: #666; }
  .b { font-size: 12.9px; font-weight: 500; fill: #656565; }
  .l { font-size: 16.2px; font-weight: 500; fill: #555; }
  .g { font-size: 13.1px; fill: #3a9c5c; stroke: none; }
  .us { fill: #fff; stroke: #6a6a6a; stroke-width: 1; }
  .us-number { font: 500 9.3px Roboto, sans-serif; fill: #5d5d5d; text-anchor: middle; }
  .i-number { font: 700 9.3px 'Open Sans', sans-serif; fill: #fff; text-anchor: middle; }
  .route { fill: none; stroke: #e06e24; stroke-width: 4; stroke-linejoin: round; }
  .pin { fill: #3b3b3b; }
  .ring { fill: #fff; stroke: #3b3b3b; stroke-width: 2; }
  .zoom {
    position: absolute;
    box-sizing: border-box;
    right: 49px;
    bottom: 42px;
    width: 32px;
    height: 62px;
    padding-top: 1px;
    background: #fff;
    box-shadow: 0 0 5px rgba(0, 0, 0, 0.22);
    display: flex;
    flex-direction: column;
    align-items: center;
  }
  .zoom button { flex: 1; width: 18px; background: none; display: grid; place-items: center; }
  .zoom button + button { border-top: 1px solid #d5d5d5; }
  .zoom svg { width: 12px; height: 12px; stroke: #038c50; stroke-width: 2; }
  h2 { margin: 35px 0 0 1.5px; font-size: 13.8px; line-height: 20px; font-weight: 600; color: #e06e24; letter-spacing: -0.28px; }
  h3 { margin: 22px 0 0 0.5px; }
  .place-line { display: flex; margin: 11px 0 0 1px; color: #6f6f6f; font-size: 13.8px; font-weight: 600; letter-spacing: -0.28px; }
  .place-line svg { width: 14px; height: 20px; margin: 0 7px 0 0; }
  .grid { display: grid; grid-template-columns: 299.5px 330px 1fr; margin-left: -0.5px; }
  .service { margin-top: 11px; height: 60px; }
  .service .field { padding-top: 15px; }
  .label { color: #7b7b7b; height: 20px; line-height: 22px; letter-spacing: -0.22px; }
  .value { margin-top: 5px; height: 20px; line-height: 22px; letter-spacing: -0.07px; }
  .contact .field:nth-child(3) .value { letter-spacing: -0.22px; }
  .contact .field:nth-child(3) { margin-top: -1px; }
  .contact .field:nth-child(6) .label { margin: 1px 0 -1px 0.5px; letter-spacing: -0.16px; }
  .days { display: flex; gap: 2px; margin: 11px 0 0 1px; }
  .days span { width: 24px; height: 24px; box-sizing: border-box; padding-left: 1px; line-height: 24px; text-align: center; font-size: 14px; color: #f0605f; }
  .days .open { background: #8bc83c; color: #fff; }
  .days span:first-child { border-radius: 4px 0 0 4px; }
  hr { width: 100%; height: 1px; margin: 35px 0; border: 0; background: #e0e0e0; flex: none; }
  .contact { row-gap: 30px; }
  .notes { margin: 31px 0 -4px; }
  .notes p { margin-top: 7px; line-height: 30px; letter-spacing: -0.11px; }
  .disclaimer { padding-top: 1px; color: #949494; letter-spacing: -0.15px; }
</style>
